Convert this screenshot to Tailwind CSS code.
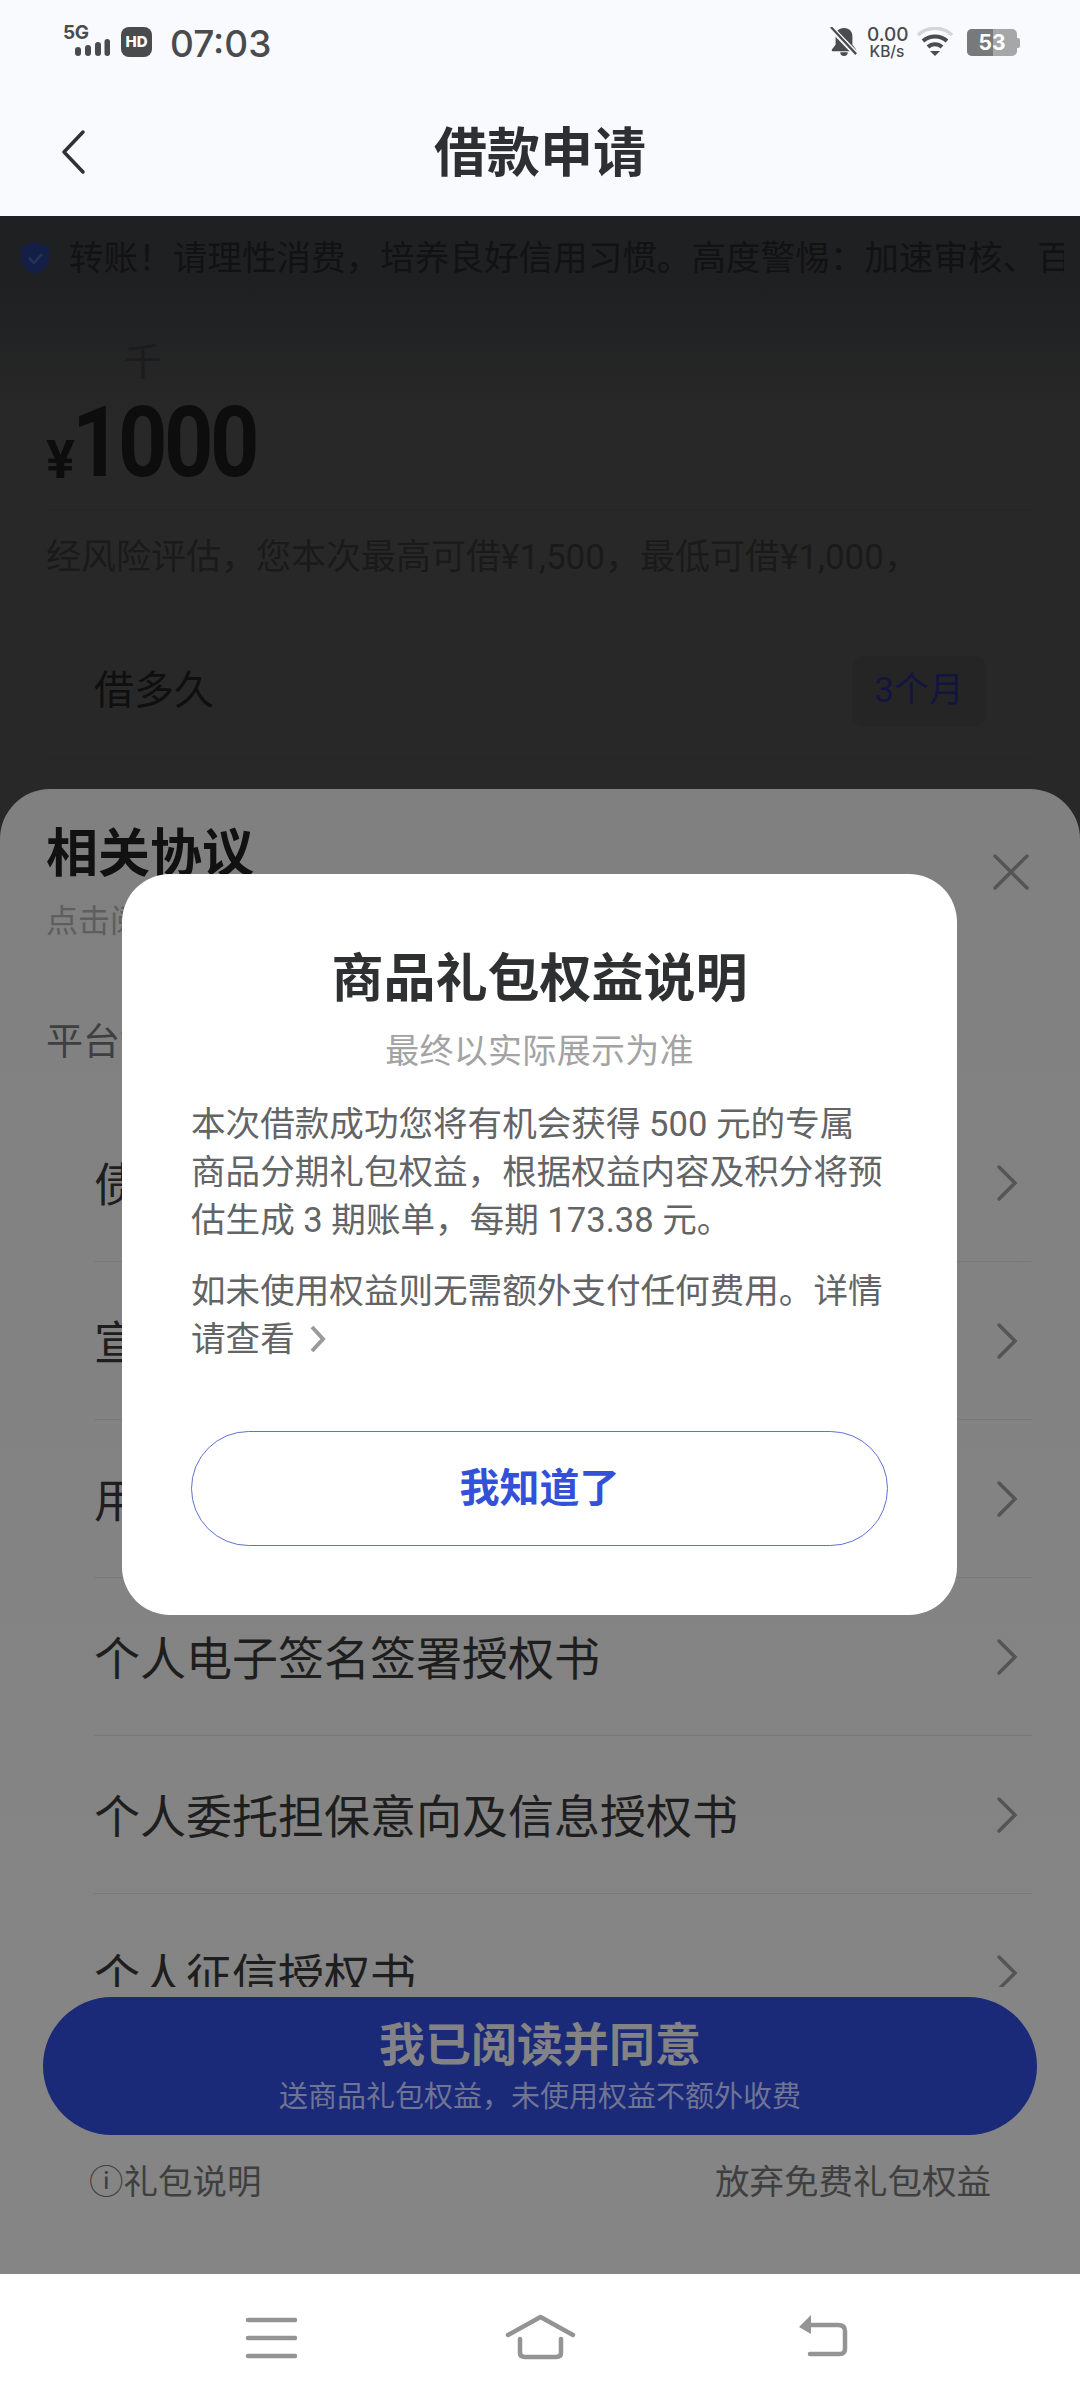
<!DOCTYPE html>
<html lang="zh-CN">
<head>
    <meta charset="UTF-8">
    <meta name="viewport" content="width=device-width, initial-scale=1.0">
    <title>借款申请</title>
    <script src="https://cdn.jsdelivr.net/npm/@tailwindcss/browser@4"></script>
</head>
<body class="w-[1080px] h-[2400px] overflow-hidden font-['Roboto','Noto_Sans_CJK_SC',sans-serif]">
<div class="flex flex-col h-[2400px]">

    <!-- status bar + title -->
    <header class="h-[216px] bg-[#f9fafe] shrink-0">
        <div class="flex items-start justify-between h-[80px] pt-[25px] pl-[63px] pr-[60px] text-[#4a4b4d] font-['Inter','Noto_Sans_CJK_SC',sans-serif]">
            <div class="flex items-start">
                <div class="w-[47px] h-[32px] relative">
                    <span class="absolute left-0 top-[-1px] text-[19px] leading-[18px] font-bold tracking-[-0.5px]">5G</span>
                    <svg class="absolute left-[12px] top-[14px]" width="35" height="17" viewBox="0 0 35 17" fill="#4a4b4d"><rect x="0" y="8" width="6" height="9" rx="3"/><rect x="10" y="6" width="6" height="11" rx="3"/><rect x="20" y="3" width="6" height="14" rx="3"/><rect x="29.5" y="0" width="5.5" height="17" rx="2.7"/></svg>
                </div>
                <div class="ml-[11px] mt-[2px] w-[31px] h-[30px] rounded-[8px] bg-[#4a4b4d] text-white text-[15px] leading-[30px] text-center font-extrabold">HD</div>
                <span class="ml-[18px] text-[37px] leading-[37px] font-medium">07:03</span>
            </div>
            <div class="flex items-start">
                <svg class="mt-[2px]" width="28" height="30" viewBox="0 0 30 32" fill="#4a4b4d"><path d="M15 1c-6 0-9 4-9 9v9l-4 5v2h26v-2l-4-5v-9c0-5-3-9-9-9z"/><path d="M11 27h8a4 4 0 0 1-8 0z"/><path d="M1 1l27 28" stroke="#f9fafe" stroke-width="6"/><path d="M1 0l27 29" stroke="#4a4b4d" stroke-width="2.4"/></svg>
                <div class="ml-[9px] w-[40px] text-center">
                    <div class="text-[19px] leading-[19px] font-medium">0.00</div>
                    <div class="text-[15.5px] leading-[16px] font-medium">KB/s</div>
                </div>
                <svg class="ml-[10px] mt-[2px]" width="36" height="30" viewBox="0 0 36 30" fill="none"><path d="M1 8a25 25 0 0 1 34 0" stroke="#d4d5d7" stroke-width="3.5"/><path d="M6 14a18 18 0 0 1 24 0" stroke="#4a4b4d" stroke-width="4"/><path d="M11 20a10 10 0 0 1 14 0" stroke="#4a4b4d" stroke-width="4"/><path d="M13 24h10l-5 5z" fill="#4a4b4d"/></svg>
                <div class="ml-[14px] mt-[4px] flex items-center">
                    <div class="relative w-[50px] h-[27px] rounded-[5px] overflow-hidden bg-[#a6a7a9] text-white text-[21px] leading-[27px] text-center font-bold">
                        <div class="absolute left-0 top-0 w-[26px] h-[27px] bg-[#78797b]"></div>
                        <span class="relative">53</span>
                    </div>
                    <div class="w-[3px] h-[10px] rounded-r-[2px] bg-[#a6a7a9]"></div>
                </div>
            </div>
        </div>
        <div class="relative h-[136px] flex items-start justify-center">
            <svg class="absolute left-[60px] top-[49px]" width="26" height="46" viewBox="0 0 26 46" fill="none"><path d="M23 3L4 23l19 20" stroke="#2f3033" stroke-width="3.5" stroke-linecap="round" stroke-linejoin="round"/></svg>
            <h1 class="mt-[41px] text-[53px] leading-[66px] font-bold text-[#2e2f31]">借款申请</h1>
        </div>
    </header>

    <main class="relative flex-1 bg-[linear-gradient(#1f2022_0,#1f2022_70px,#282828_200px)] overflow-hidden">
        <!-- dimmed page under the sheet -->
        <div class="h-[80px] flex items-center pt-[4px] whitespace-nowrap pl-[20px] pr-[16px]">
            <svg class="shrink-0" width="30" height="34" viewBox="0 0 30 34"><path d="M15 1l14 5v11c0 8-6 13-14 16C7 30 1 25 1 17V6z" fill="#131f44"/><path d="M9 17l5 5 8-9" stroke="#24335e" stroke-width="2.5" fill="none"/></svg>
            <span class="ml-[19px] min-w-0 overflow-hidden text-[34.6px] leading-[48px] text-[#121213]">转账！请理性消费，培养良好信用习惯。高度警惕：加速审核、百</span>
        </div>
        <div class="px-[46px]">
            <div class="pt-[46px] pl-[78px] text-[38px] leading-[40px] text-[#1c1c1c]">千</div>
            <div class="flex items-end h-[96px] mt-[13px] font-bold text-[#0d0d0d]">
                <span class="text-[54px] leading-[62px]">¥</span>
                <span class="inline-block -ml-[3px] origin-left scale-x-[0.88] text-[98px] leading-[96px] tracking-[-4px]">1000</span>
            </div>
            <div class="mt-[19px] border-t border-[#252525]"></div>
            <p class="mt-[23px] text-[35px] leading-[48px] text-[#1a1a1a]">经风险评估，您本次最高可借¥1,500，最低可借¥1,000，</p>
            <div class="mt-[41px] h-[136px] flex items-center justify-between px-[48px] border-b border-[#262626]">
                <span class="text-[40px] leading-[56px] text-[#0f0f0f]">借多久</span>
                <span class="w-[134px] h-[70px] rounded-[12px] bg-[#252526] text-center text-[35px] leading-[70px] text-[#14153f]">3个月</span>
            </div>
        </div>

        <!-- agreement sheet -->
        <section class="absolute left-0 right-0 top-[573px] bottom-0 rounded-t-[50px] bg-gradient-to-b from-[#808080] to-[#868686]">
            <div class="relative px-[46px] pt-[34px]">
                <h2 class="text-[52px] leading-[64px] font-bold text-[#111]">相关协议</h2>
                <p class="mt-[12px] text-[32px] leading-[44px] text-[#5e5e5e]">点击阅读相关协议</p>
                <svg class="absolute right-[50px] top-[64px]" width="38" height="38" viewBox="0 0 38 38" fill="none"><path d="M3 3l32 32M35 3L3 35" stroke="#555" stroke-width="3.5" stroke-linecap="round"/></svg>
                <p class="mt-[73px] text-[37px] leading-[54px] text-[#3f3f3f]">平台协议</p>
            </div>
            <ul class="mt-[34px] ml-[94px] mr-[48px]">
                <li class="h-[158px] flex items-center justify-between pr-[14px] border-b border-[#797979]">
                    <span class="pt-[6px] text-[46px] text-[#1e1e1e]">债权转让协议</span>
                    <svg width="22" height="38" viewBox="0 0 22 38" fill="none"><path d="M3 3l16 16L3 35" stroke="#555" stroke-width="3.5" stroke-linecap="round"/></svg>
                </li>
                <li class="h-[158px] flex items-center justify-between pr-[14px] border-b border-[#797979]">
                    <span class="pt-[6px] text-[46px] text-[#1e1e1e]">宣传推广授权书</span>
                    <svg width="22" height="38" viewBox="0 0 22 38" fill="none"><path d="M3 3l16 16L3 35" stroke="#555" stroke-width="3.5" stroke-linecap="round"/></svg>
                </li>
                <li class="h-[158px] flex items-center justify-between pr-[14px] border-b border-[#797979]">
                    <span class="pt-[6px] text-[46px] text-[#1e1e1e]">用户授权协议</span>
                    <svg width="22" height="38" viewBox="0 0 22 38" fill="none"><path d="M3 3l16 16L3 35" stroke="#555" stroke-width="3.5" stroke-linecap="round"/></svg>
                </li>
                <li class="h-[158px] flex items-center justify-between pr-[14px] border-b border-[#797979]">
                    <span class="pt-[6px] text-[46px] text-[#1e1e1e]">个人电子签名签署授权书</span>
                    <svg width="22" height="38" viewBox="0 0 22 38" fill="none"><path d="M3 3l16 16L3 35" stroke="#555" stroke-width="3.5" stroke-linecap="round"/></svg>
                </li>
                <li class="h-[158px] flex items-center justify-between pr-[14px] border-b border-[#797979]">
                    <span class="pt-[6px] text-[46px] text-[#1e1e1e]">个人委托担保意向及信息授权书</span>
                    <svg width="22" height="38" viewBox="0 0 22 38" fill="none"><path d="M3 3l16 16L3 35" stroke="#555" stroke-width="3.5" stroke-linecap="round"/></svg>
                </li>
                <li class="h-[158px] flex items-center justify-between pr-[14px]">
                    <span class="pt-[6px] text-[46px] text-[#1e1e1e]">个人征信授权书</span>
                    <svg width="22" height="38" viewBox="0 0 22 38" fill="none"><path d="M3 3l16 16L3 35" stroke="#555" stroke-width="3.5" stroke-linecap="round"/></svg>
                </li>
            </ul>
            <!-- pinned footer covers the last row -->
            <div class="absolute left-0 right-0 bottom-0 h-[287px] bg-[#858585] px-[43px] pt-[10px]">
                <div class="h-[138px] rounded-full bg-[#1b2a78] flex flex-col items-center justify-center gap-[5px] pt-[1px]">
                    <span class="text-[46px] leading-[56px] font-bold text-[#838386]">我已阅读并同意</span>
                    <span class="text-[29px] leading-[38px] text-[#6f7494]">送商品礼包权益，未使用权益不额外收费</span>
                </div>
                <div class="mt-[24px] flex justify-between px-[46px] text-[34.5px] leading-[46px] text-[#3f3f3f]">
                    <span>ⓘ礼包说明</span>
                    <span>放弃免费礼包权益</span>
                </div>
            </div>
        </section>

        <!-- dialog -->
        <div class="absolute left-[122px] top-[658px] w-[835px] h-[741px] rounded-[48px] bg-white px-[69px] pt-[71px]">
            <h3 class="text-center text-[52px] leading-[70px] font-bold text-[#2f3032]">商品礼包权益说明</h3>
            <p class="mt-[11px] text-center text-[34px] tracking-[0.3px] leading-[50px] text-[#a3a3a3]">最终以实际展示为准</p>
            <p class="mt-[24px] text-[34.6px] leading-[48px] text-[#636466]">本次借款成功您将有机会获得 500 元的专属商品分期礼包权益，根据权益内容及积分将预估生成 3 期账单，每期 173.38 元。</p>
            <p class="mt-[23px] text-[34.6px] leading-[48px] text-[#636466]">如未使用权益则无需额外支付任何费用。详情请查看
                <svg class="inline-block ml-[6px] align-[-3px]" width="18" height="30" viewBox="0 0 18 30" fill="none"><path d="M3 3l11 12L3 27" stroke="#9a9a9a" stroke-width="4"/></svg>
            </p>
            <button class="mt-[68px] w-full h-[115px] rounded-full border border-[#5f72cf] text-[40px] font-bold text-[#3350d8]">我知道了</button>
        </div>
    </main>

    <!-- system nav -->
    <nav class="h-[126px] bg-white shrink-0 flex items-center justify-center relative">
        <svg class="absolute left-[245px] top-[43px]" width="52" height="42" viewBox="0 0 52 42" fill="none"><path d="M3 3h47M3 21h47M3 39h47" stroke="#949494" stroke-width="4.5" stroke-linecap="round"/></svg>
        <svg class="absolute left-[505px] top-[40px]" width="71" height="46" viewBox="0 0 71 46" fill="none"><path d="M3 21L35.5 3 68 21" stroke="#949494" stroke-width="4.5" stroke-linecap="round" stroke-linejoin="round"/><path d="M15 25v14c0 3 2 4 5 4h31c3 0 5-1 5-4V25" stroke="#949494" stroke-width="4.5" stroke-linecap="round"/></svg>
        <svg class="absolute left-[798px] top-[40px]" width="52" height="44" viewBox="0 0 52 44" fill="none"><path d="M10 11h30c5 0 7 2 7 6v18c0 3-2 5-5 5H12" stroke="#949494" stroke-width="4.5" stroke-linecap="round"/><path d="M13 1v19L1 13z" fill="#949494"/></svg>
    </nav>
</div>
</body>
</html>
